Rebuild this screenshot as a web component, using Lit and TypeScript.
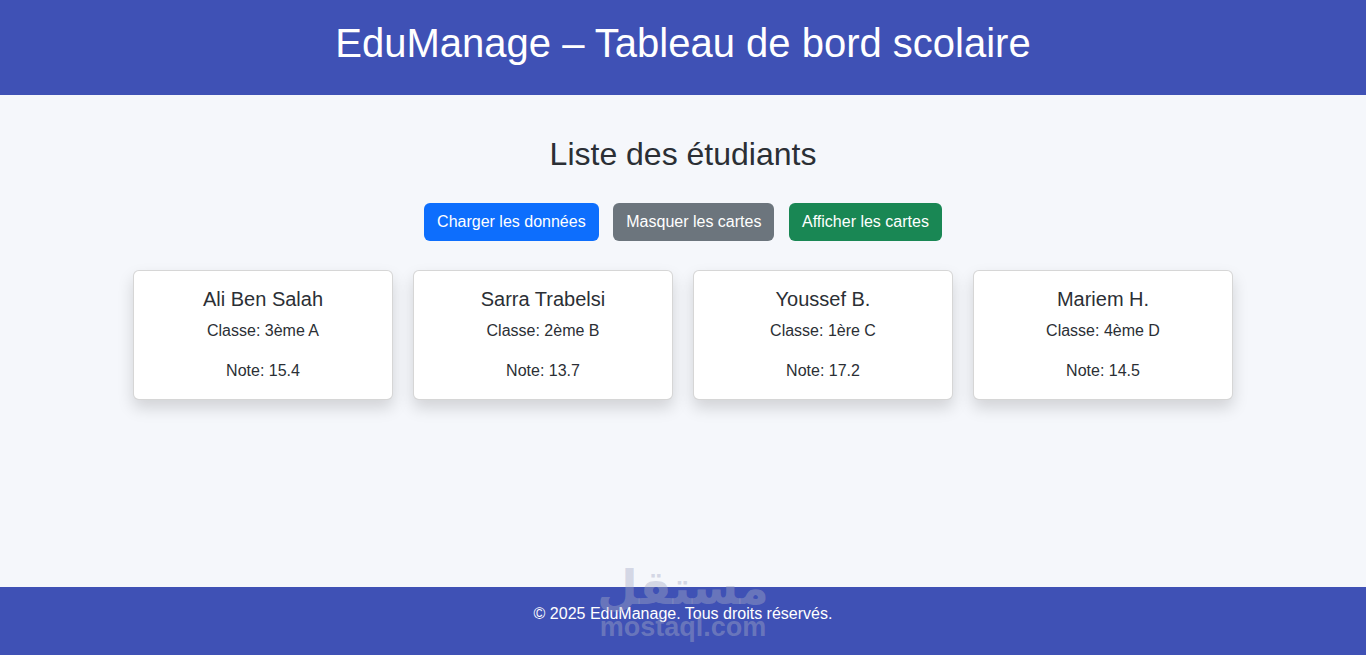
import { LitElement, html, css } from "lit";
import { customElement } from "lit/decorators.js";

const students = [
  { name: "Ali Ben Salah", cls: "3ème A", note: "15.4" },
  { name: "Sarra Trabelsi", cls: "2ème B", note: "13.7" },
  { name: "Youssef B.", cls: "1ère C", note: "17.2" },
  { name: "Mariem H.", cls: "4ème D", note: "14.5" },
];

@customElement("app-root")
export class AppRoot extends LitElement {
  static styles = css`
    :host {
      display: flex;
      flex-direction: column;
      min-height: 100vh;
      position: relative;
      background: #f5f7fb;
      color: #2b2f35;
      font-family: "Liberation Sans", Arial, sans-serif;
      font-size: 16px;
      line-height: 24px;
    }
    * { box-sizing: border-box; }
    header {
      height: 95px;
      background: #3f51b5;
      color: #fff;
      text-align: center;
      padding-top: 19px;
    }
    h1 { margin: 0; font-size: 40px; line-height: 48px; font-weight: 400; }
    main {
      flex: 1;
      display: flex;
      flex-direction: column;
      align-items: center;
      padding-top: 40px;
    }
    h2 { margin: 0 0 30px; font-size: 32px; line-height: 38px; font-weight: 400; }
    .actions { display: flex; gap: 14.6px; margin-bottom: 29px; }
    button {
      height: 38px;
      padding: 0 12px;
      border: 1px solid transparent;
      border-radius: 6px;
      color: #fff;
      font: inherit;
    }
    .primary { background: #0d6efd; }
    .secondary { background: #6c757d; }
    .success { background: #198754; }
    .cards { display: flex; gap: 20px; }
    .card {
      width: 260px;
      height: 130px;
      background: #fff;
      border: 1px solid rgba(0, 0, 0, 0.16);
      border-radius: 6px;
      box-shadow: 0 8px 16px rgba(0, 0, 0, 0.15);
      padding: 16px;
      text-align: center;
    }
    h5 { margin: 0 0 8px; font-size: 20px; line-height: 24px; font-weight: 400; }
    p { margin: 0 0 16px; }
    footer {
      height: 68px;
      background: #3f51b5;
      color: #fff;
      text-align: center;
      padding-top: 15px;
    }
    .mark {
      position: absolute;
      left: 583px;
      top: 561px;
      width: 200px;
      color: rgba(165, 170, 198, 0.42);
      text-align: center;
      pointer-events: none;
    }
    .mark-ar {
      display: block;
      font-family: "DejaVu Sans", sans-serif;
      font-weight: 700;
      font-size: 47px;
      line-height: 54px;
    }
    .mark-en {
      display: block;
      margin-top: -1px;
      font-weight: 700;
      font-size: 27px;
      line-height: 27px;
    }
  `;

  render() {
    return html`
      <header><h1>EduManage – Tableau de bord scolaire</h1></header>
      <main>
        <h2>Liste des étudiants</h2>
        <div class="actions">
          <button class="primary">Charger les données</button>
          <button class="secondary">Masquer les cartes</button>
          <button class="success">Afficher les cartes</button>
        </div>
        <div class="cards">
          ${students.map(
            (s) => html`<div class="card">
              <h5>${s.name}</h5>
              <p>Classe: ${s.cls}</p>
              <p>Note: ${s.note}</p>
            </div>`
          )}
        </div>
      </main>
      <footer>© 2025 EduManage. Tous droits réservés.</footer>
      <div class="mark" aria-hidden="true">
        <span class="mark-ar">مستقل</span>
        <span class="mark-en">mostaql.com</span>
      </div>
    `;
  }
}
